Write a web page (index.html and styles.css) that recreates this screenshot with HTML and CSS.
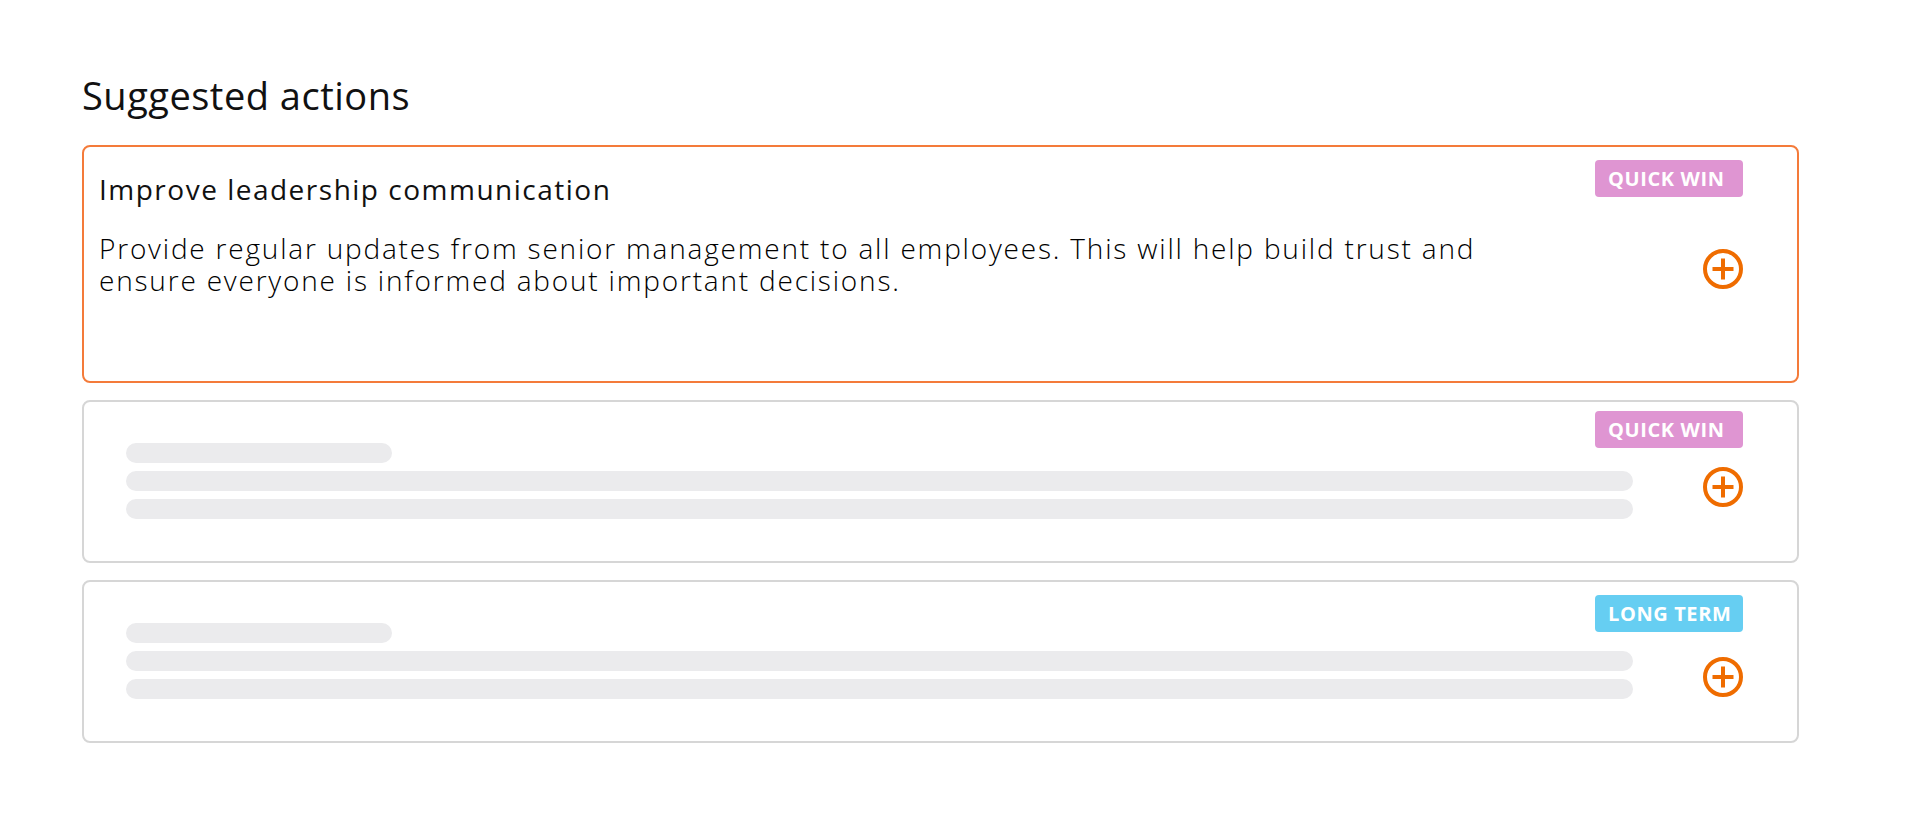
FILE: index.html
```html
<!DOCTYPE html>
<html lang="en">

<head>
  <meta charset="UTF-8">
  <meta name="viewport" content="width=device-width, initial-scale=1.0">
  <title>Suggested actions</title>
  <link rel="stylesheet" href="styles.css">
</head>

<body>

<main class="page">
  <h2 class="section-title">Suggested actions</h2>

  <div class="action-list">

    <!-- Azione selezionata -->
    <div class="action-card action-card--active">
      <span class="tag tag--quick">QUICK WIN</span>
      <div class="action-body">
        <h3 class="action-title">Improve leadership communication</h3>
        <p class="action-text">Provide regular updates from senior management to all employees. This will help build trust and ensure everyone is informed about important decisions.</p>
      </div>
      <button class="add-btn add-btn--first" aria-label="Add">
        <svg viewBox="0 0 40 40"><circle cx="20" cy="20" r="18"/><path d="M20 9.5V30.5M9.5 20H30.5"/></svg>
      </button>
    </div>

    <!-- Azioni in caricamento -->
    <div class="action-card action-card--loading">
      <span class="tag tag--quick tag--high">QUICK WIN</span>
      <div class="skeleton">
        <span class="bar bar--short"></span>
        <span class="bar"></span>
        <span class="bar"></span>
      </div>
      <button class="add-btn add-btn--second" aria-label="Add">
        <svg viewBox="0 0 40 40"><circle cx="20" cy="20" r="18"/><path d="M20 9.5V30.5M9.5 20H30.5"/></svg>
      </button>
    </div>

    <div class="action-card action-card--loading">
      <span class="tag tag--long">LONG TERM</span>
      <div class="skeleton">
        <span class="bar bar--short"></span>
        <span class="bar"></span>
        <span class="bar"></span>
      </div>
      <button class="add-btn add-btn--third" aria-label="Add">
        <svg viewBox="0 0 40 40"><circle cx="20" cy="20" r="18"/><path d="M20 9.5V30.5M9.5 20H30.5"/></svg>
      </button>
    </div>

  </div>
</main>

</body>
</html>
```

FILE: styles.css
```css
body {
  margin: 0;
  padding: 0;
  font-family: "Open Sans", "Noto Sans", sans-serif;
  background-color: #fff;
  color: #111;
}

.page {
  width: 1717px;
  padding-left: 82px;
}

.section-title {
  font-size: 38px;
  font-weight: 400;
  line-height: 46px;
  letter-spacing: 0.5px;
  margin: 72px 0 27px;
}

.action-list {
  display: flex;
  flex-direction: column;
  gap: 17px;
}

/* Card */
.action-card {
  position: relative;
  display: flex;
  align-items: flex-start;
  box-sizing: border-box;
  height: 163px;
  padding: 0 54px 0 15px;
  border: 2px solid #d6d6d6;
  border-radius: 8px;
}

.action-card--active {
  height: 238px;
  border-color: #f47b3a;
}

.action-body {
  flex: 1;
  padding-top: 24px;
}

.action-title {
  font-size: 28px;
  font-weight: 400;
  line-height: 36px;
  letter-spacing: 1.5px;
  margin: 0;
}

.action-text {
  max-width: 1420px;
  font-size: 28px;
  font-weight: 300;
  line-height: 32px;
  letter-spacing: 1.8px;
  color: #000;
  margin: 25px 0 0;
}

/* Etichette */
.tag {
  position: absolute;
  top: 13px;
  right: 54px;
  width: 148px;
  height: 37px;
  box-sizing: border-box;
  padding-left: 13px;
  border-radius: 4px;
  color: #fff;
  font-size: 20px;
  font-weight: 700;
  line-height: 37px;
  letter-spacing: 0.6px;
}

.tag--high {
  top: 9px;
}

.tag--quick {
  background-color: #df95d2;
}

.tag--long {
  background-color: #66cef2;
}

/* Skeleton */
.skeleton {
  flex: 1;
  display: flex;
  flex-direction: column;
  gap: 8px;
  padding: 41px 0 0 27px;
}

.bar {
  display: block;
  width: 1507px;
  height: 20px;
  border-radius: 10px;
  background-color: #ebebed;
}

.bar--short {
  width: 266px;
}

/* Bottone + */
.add-btn {
  width: 40px;
  height: 40px;
  padding: 0;
  border: none;
  background: none;
  cursor: pointer;
}

.add-btn svg {
  display: block;
  width: 40px;
  height: 40px;
  fill: none;
  stroke: #ef6c00;
  stroke-width: 4;
}

.add-btn--first {
  margin-top: 102px;
}

.add-btn--second {
  margin-top: 65px;
}

.add-btn--third {
  margin-top: 75px;
}
```
